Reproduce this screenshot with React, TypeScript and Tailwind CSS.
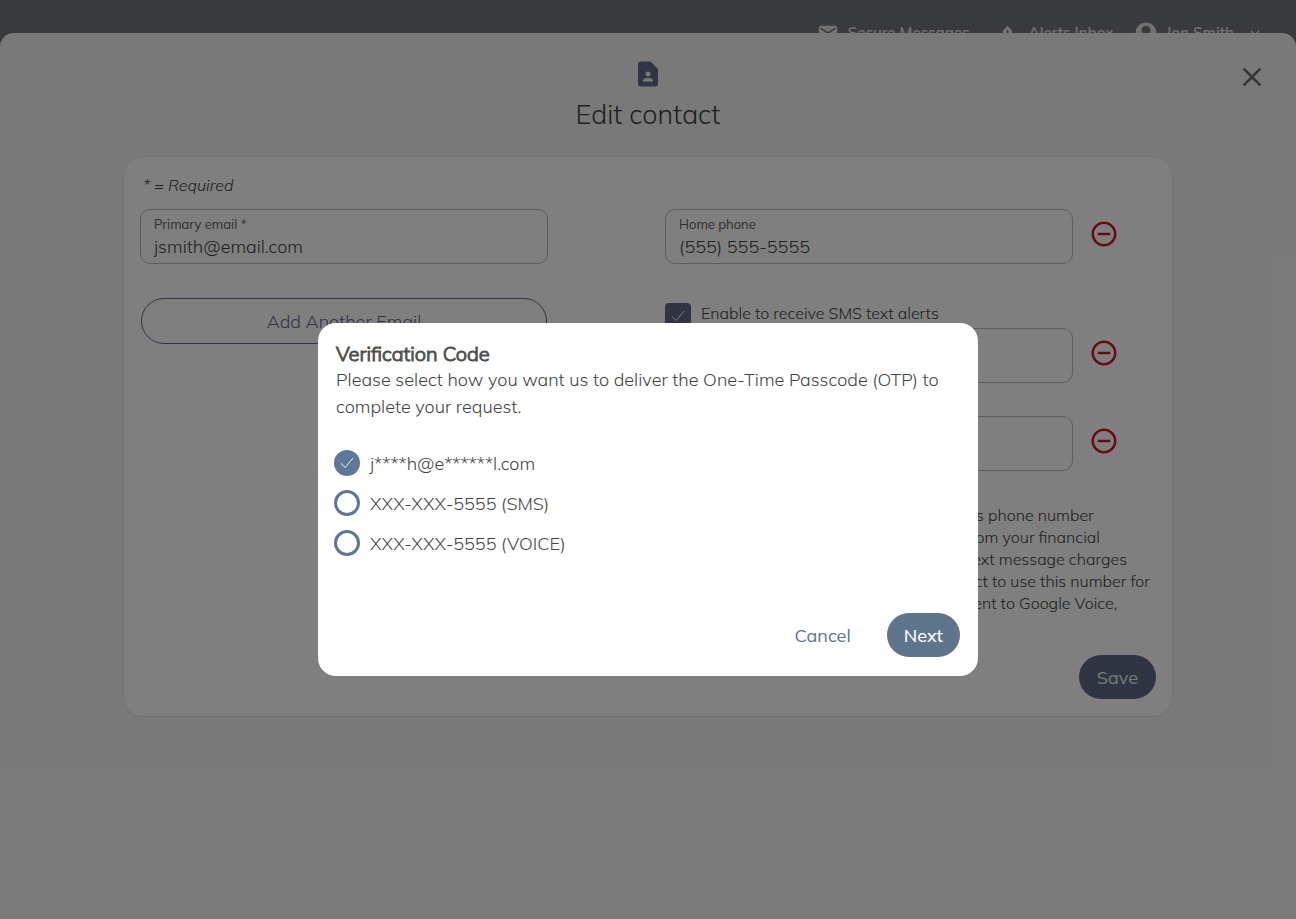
import { useState } from "react";
import type { ReactNode } from "react";
import {
  MdClose,
  MdContactPage,
  MdKeyboardArrowDown,
  MdMail,
  MdNotificationImportant,
  MdRemoveCircleOutline,
} from "react-icons/md";

function AvatarIcon() {
  return (
    <svg viewBox="0 0 22 22" className="size-[22px]" aria-hidden="true">
      <path
        fill="currentColor"
        fillRule="evenodd"
        d="M11 .5a10.500 10.500 0 1 0 0 21 10.500 10.500 0 0 0 0-21Zm0 3.200a4.500 4.500 0 1 1 0 9 4.500 4.500 0 0 1 0-9Zm0 15.300c-2.700 0-5-1.300-6.300-3.300.1-1.500 4.200-2.300 6.300-2.300s6.200.8 6.300 2.300c-1.300 2-3.600 3.300-6.300 3.300Z"
      />
    </svg>
  );
}

function Check({ className }: { className: string }) {
  return (
    <svg viewBox="0 0 26 26" className={className} fill="none" stroke="currentColor" aria-hidden="true">
      <path d="M7 13.500l4.200 4L19 8" />
    </svg>
  );
}

function TopBar() {
  return (
    <header className="flex h-[66px] items-center justify-end bg-[#72747b] pr-8 text-[15px] font-semibold text-[#e4e4e4]">
      <a href="#messages" className="flex items-center gap-[9px]">
        <MdMail className="size-[22px]" />
        Secure Messages
      </a>
      <a href="#alerts" className="ml-7 flex items-center gap-3">
        <MdNotificationImportant className="size-[19px]" />
        Alerts Inbox
      </a>
      <button type="button" className="ml-[22px] flex items-center">
        <AvatarIcon />
        <span className="ml-[9px]">Jon Smith</span>
        <MdKeyboardArrowDown className="ml-3 size-[18px]" />
      </button>
    </header>
  );
}

type FieldProps = { id: string; label: string; value: string; type: string };

function Field({ id, label, value, type }: FieldProps) {
  return (
    <div className="h-[55px] rounded-[10px] border border-[#b4bcbc] px-[13px] pt-[6px]">
      <label htmlFor={id} className="block text-[13px] leading-4 font-normal text-[#5c5c5c]">
        {label}
      </label>
      <input
        id={id}
        type={type}
        defaultValue={value}
        className="mt-px block w-full bg-transparent text-[18px] leading-7 text-[#404040] outline-none"
      />
    </div>
  );
}

function PhoneRow(props: FieldProps) {
  return (
    <div className="grid grid-cols-[1fr_83px]">
      <Field {...props} />
      <button
        type="button"
        aria-label={`Remove ${props.label}`}
        className="mt-[10px] ml-4 size-[30px] text-[#cc1428]"
      >
        <MdRemoveCircleOutline className="size-[30px]" />
      </button>
    </div>
  );
}

const terms = [
  "By choosing this option, you accept that this phone number",
  "may be used for receiving text messages from your financial",
  "institution. Your carrier's normal data and text message charges",
  "may apply. You hereby authorize the product to use this number for",
  "security codes. Certain codes may not be sent to Google Voice,",
];

function ContactForm() {
  return (
    <form className="mx-auto mt-6 w-full max-w-[1050px] rounded-[20px] border border-[#e4e4e4] bg-white px-4 pt-4 pb-[17px]">
      <p className="pl-[3px] text-[16px] leading-6 text-[#404040] italic">* = Required</p>
      <div className="mt-3 grid grid-cols-2 gap-x-[34px]">
        <div className="pr-[83px]">
          <Field id="email" type="email" label="Primary email *" value="jsmith@email.com" />
          <div className="mt-[34px] px-px">
            <button
              type="button"
              className="h-[46px] w-full rounded-full border border-[#5e6a8c] text-[18px] text-[#5e6a8a]"
            >
              Add Another Email
            </button>
          </div>
        </div>
        <div>
          <PhoneRow id="home" type="tel" label="Home phone" value="(555) 555-5555" />
          <div className="mt-[39px] flex h-[25px] gap-[10px]">
            <span className="grid size-[26px]">
              <input
                id="sms"
                type="checkbox"
                defaultChecked
                className="col-start-1 row-start-1 size-[26px] appearance-none rounded-[4px] bg-[#5f6a85]"
              />
              <Check className="pointer-events-none col-start-1 row-start-1 size-[26px] text-[#f2f2e8]" />
            </span>
            <label htmlFor="sms" className="text-[16px] leading-[21px] text-[#404040]">
              Enable to receive SMS text alerts
            </label>
          </div>
          <PhoneRow id="mobile" type="tel" label="Mobile phone" value="(555) 555-5555" />
          <div className="mt-[33px]">
            <PhoneRow id="work" type="tel" label="Work phone" value="(555) 555-5555" />
          </div>
          <p className="mt-[33px] text-[16px] leading-[22px] text-[#404040]">
            {terms.map((line) => (
              <span key={line} className="block whitespace-nowrap">
                {line}
              </span>
            ))}
          </p>
        </div>
      </div>
      <div className="mt-[41px] flex justify-end">
        <button
          type="button"
          className="h-11 rounded-full bg-[#5f6a85] px-[18px] text-[18px] font-normal text-[#f4f4f4]"
        >
          Save
        </button>
      </div>
    </form>
  );
}

function EditContactSheet() {
  return (
    <main className="absolute inset-x-0 top-[33px] bottom-0 overflow-hidden rounded-t-[14px] bg-[#f3f3f3] px-6">
      <button type="button" aria-label="Close" className="absolute top-7 right-7 text-[#6c6c6c]">
        <MdClose className="size-8" />
      </button>
      <div className="flex flex-col items-center pt-[26px]">
        <MdContactPage className="size-[30px] text-[#5f6a85]" />
        <h1 className="mt-2 mb-px text-[27px] leading-[34px] text-[#404040]">Edit contact</h1>
      </div>
      <ContactForm />
    </main>
  );
}

function Option(props: { id: string; checked: boolean; onSelect: () => void; children: ReactNode }) {
  return (
    <div className="flex h-10 items-center gap-[10px]">
      <span className="grid size-[26px]">
        <input
          id={props.id}
          type="radio"
          name="delivery"
          checked={props.checked}
          onChange={props.onSelect}
          className="col-start-1 row-start-1 size-[26px] appearance-none rounded-full border-[3px] border-[#5f7899] checked:bg-[#5f7899]"
        />
        {props.checked && (
          <Check className="pointer-events-none col-start-1 row-start-1 size-[26px] text-[#f4f4e4]" />
        )}
      </span>
      <label htmlFor={props.id} className="text-[18px]">
        {props.children}
      </label>
    </div>
  );
}

const options = ["j****h@e******l.com", "XXX-XXX-5555 (SMS)", "XXX-XXX-5555 (VOICE)"];

function VerificationDialog() {
  const [selected, setSelected] = useState(0);
  return (
    <div className="absolute inset-0 flex items-center justify-center bg-black/50 pt-20">
      <section
        role="dialog"
        aria-labelledby="dialog-title"
        className="w-full max-w-[660px] rounded-[18px] bg-white px-[18px] pt-[18px] pb-[19px] text-[#444444]"
      >
        <h2 id="dialog-title" className="text-[20px] leading-[26px] text-[#505050] [-webkit-text-stroke:1px]">
          Verification Code
        </h2>
        <p className="-mt-px text-[18px] leading-[27px]">
          Please select how you want us to deliver the One-Time Passcode (OTP) to complete your request.
        </p>
        <div className="-ml-0.5 pt-[23px]">
          {options.map((label, i) => (
            <Option key={label} id={`option-${i}`} checked={selected === i} onSelect={() => setSelected(i)}>
              {label}
            </Option>
          ))}
        </div>
        <div className="mt-[50px] flex items-center justify-end gap-9 text-[18px]">
          <button type="button" className="font-normal text-[#5f7489]">
            Cancel
          </button>
          <button type="button" className="h-11 rounded-full bg-[#5f758c] px-[17px] font-medium text-white">
            Next
          </button>
        </div>
      </section>
    </div>
  );
}

export default function App() {
  return (
    <div className="relative min-h-screen bg-[#72747b] font-[Mulish,Lato,sans-serif] font-light">
      <TopBar />
      <EditContactSheet />
      <VerificationDialog />
    </div>
  );
}
